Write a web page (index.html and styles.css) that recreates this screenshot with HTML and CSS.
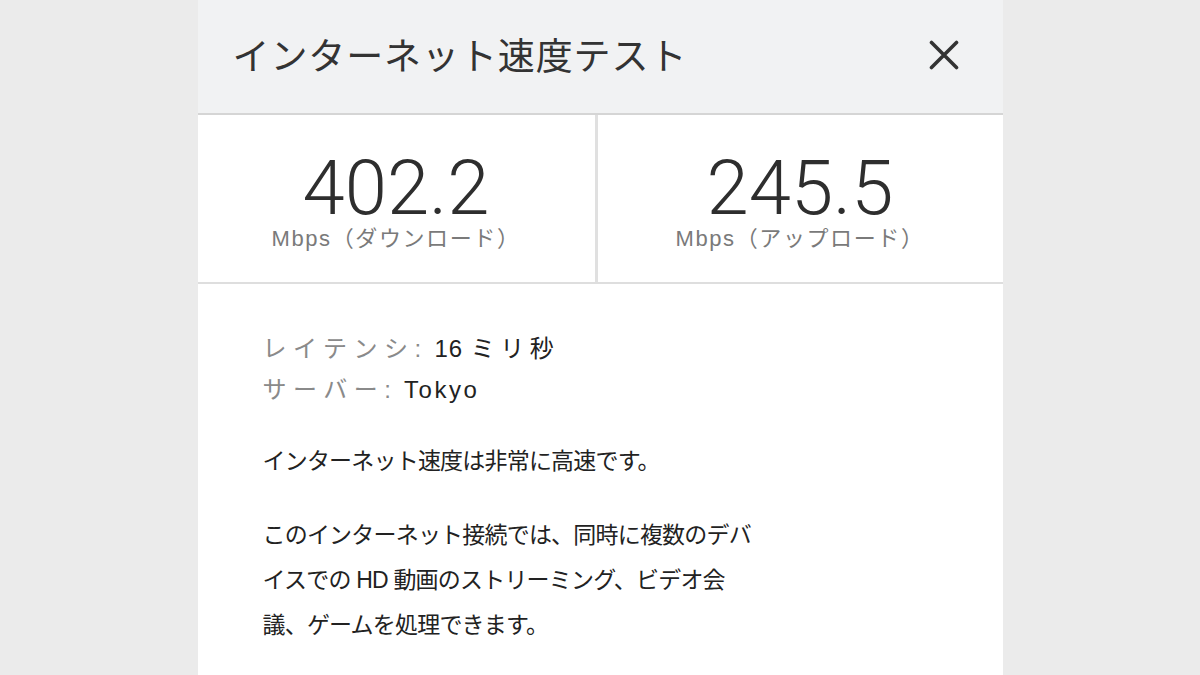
FILE: index.html
```html
<!DOCTYPE html>
<html lang="ja">
<head>
<meta charset="utf-8">
<title>インターネット速度テスト</title>
<link rel="stylesheet" href="styles.css">
</head>
<body>
<div class="panel">
  <header class="head">
    <h1 class="title">インターネット速度テスト</h1>
    <svg class="close" width="30" height="30" viewBox="0 0 30 30" aria-label="閉じる">
      <path d="M2.5 2.5 L27.5 27.5 M27.5 2.5 L2.5 27.5" stroke="#333" stroke-width="3.6" stroke-linecap="round" fill="none"/>
    </svg>
  </header>
  <section class="stats">
    <div class="stat stat-left">
      <div class="num">402.2</div>
      <div class="unit">Mbps（ダウンロード）</div>
    </div>
    <div class="stat">
      <div class="num">245.5</div>
      <div class="unit">Mbps（アップロード）</div>
    </div>
  </section>
  <section class="info">
    <div class="meta">
      <div class="row"><span class="lbl">レイテンシ:</span> <span class="val">16 <span class="jp">ミリ秒</span></span></div>
      <div class="row"><span class="lbl">サーバー:</span> <span class="val val-latin">Tokyo</span></div>
    </div>
    <p class="para">インターネット速度は非常に高速です。</p>
    <p class="para">このインターネット接続では、同時に複数のデバ<br>イスでの HD 動画のストリーミング、ビデオ会<br>議、ゲームを処理できます。</p>
  </section>
</div>
</body>
</html>
```
FILE: styles.css
```css
html, body {
  margin: 0;
  padding: 0;
}
body {
  background: #ebebeb;
  font-family: "Liberation Sans", "Noto Sans CJK JP", sans-serif;
  height: 675px;
  overflow: hidden;
}
.panel {
  width: 805px;
  margin: 0 auto;
  background: #ffffff;
  height: 675px;
}
.head {
  box-sizing: border-box;
  height: 115px;
  background: #f1f2f3;
  border-bottom: 2px solid #d5d5d5;
  display: flex;
  align-items: center;
  justify-content: space-between;
  padding: 0 44px 6px 35px;
}
.title {
  margin: 0;
  font-family: "Noto Sans CJK JP", sans-serif;
  font-weight: 400;
  font-size: 37px;
  line-height: 42px;
  letter-spacing: 0.9px;
  color: #333;
}
.close {
  display: block;
  margin-top: 2px;
}
.stats {
  display: grid;
  grid-template-columns: 400px 1fr;
  height: 169px;
  box-sizing: border-box;
  border-bottom: 2px solid #dedede;
}
.stat {
  display: flex;
  flex-direction: column;
  align-items: center;
  padding-top: 40px;
}
.stat-left {
  border-right: 3px solid #e0e0e0;
}
.num {
  font-family: Roboto, "Liberation Sans", sans-serif;
  font-weight: 300;
  font-size: 76px;
  line-height: 66px;
  color: #2e2e2e;
}
.unit {
  margin-top: 5px;
  font-size: 22px;
  line-height: 26px;
  letter-spacing: 1.6px;
  color: #7a7a7a;
}
.info {
  padding: 44px 40px 0 65px;
}
.meta {
  font-size: 24px;
  line-height: 41px;
}
.row {
  white-space: nowrap;
}
.lbl {
  color: #8a8a8a;
  letter-spacing: 6.5px;
}
.val {
  color: #222;
  letter-spacing: 1px;
}
.val .jp {
  letter-spacing: 5.5px;
}
.val-latin {
  letter-spacing: 2.5px;
}
.para {
  margin: 29px 0 0;
  font-size: 23px;
  line-height: 45px;
  letter-spacing: -0.8px;
  color: #222;
  white-space: nowrap;
}
```
